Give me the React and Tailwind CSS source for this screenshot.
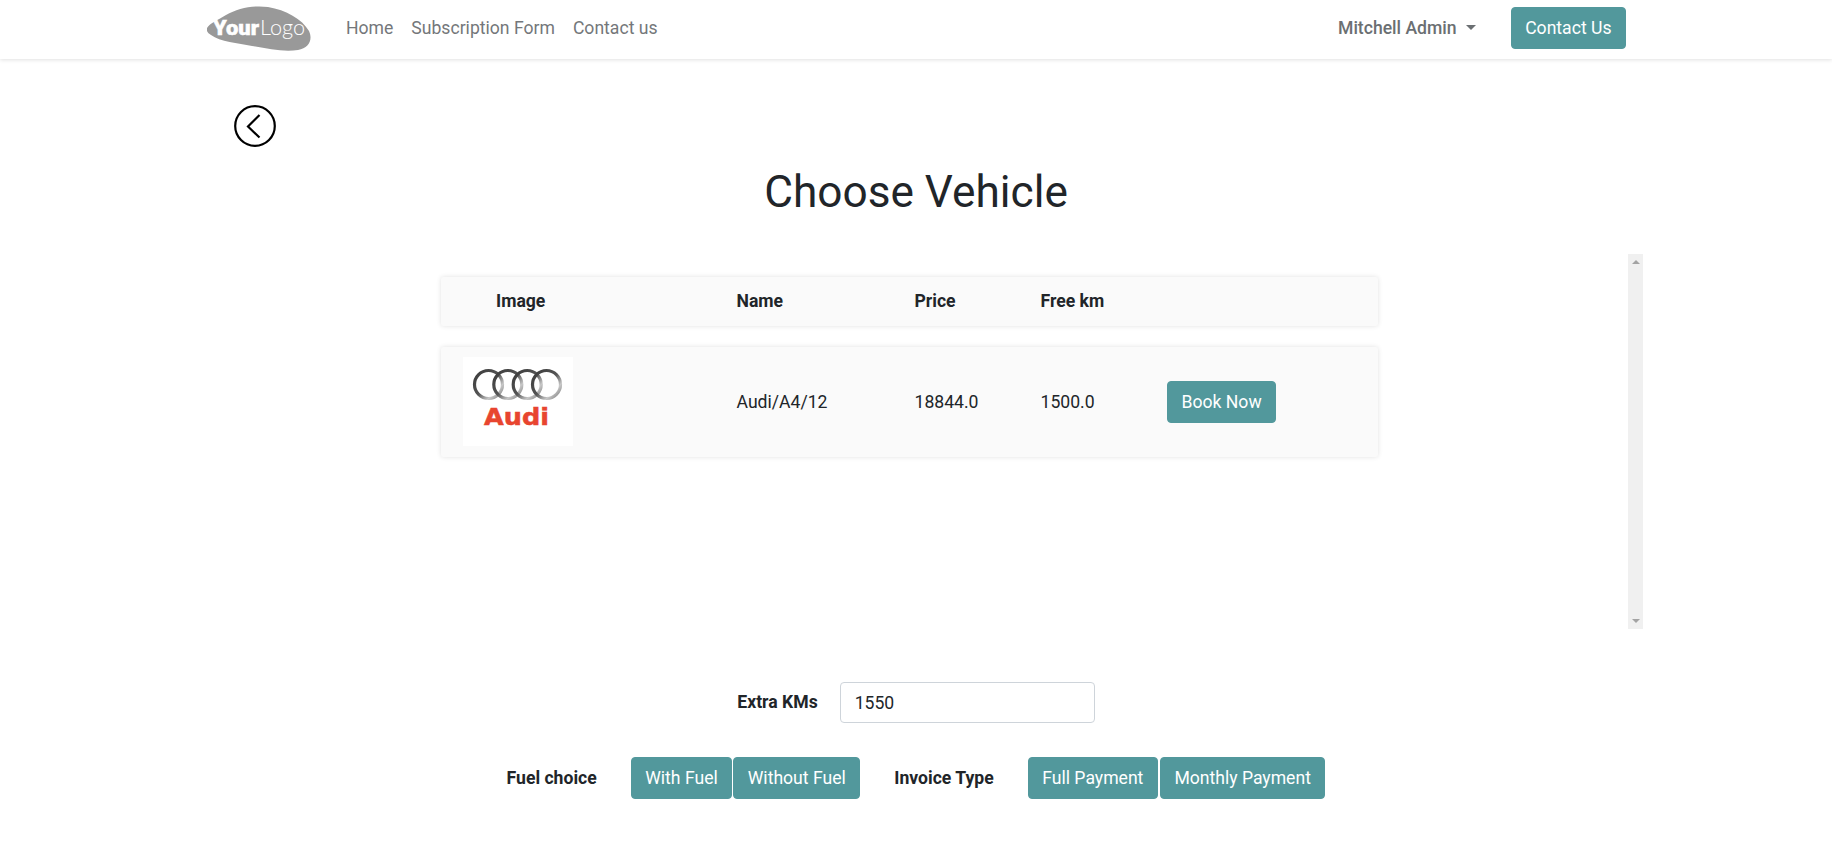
import React from "react";

const btn = "inline-flex items-center justify-center h-[42px] px-[13.5px] rounded-[4px] bg-[#52989c] text-white text-[17.6px] border border-[#52989c]";

function Logo() {
  return (
    <svg width="105" height="45" viewBox="0 0 105 45" className="block">
      <path d="M0 22 C3 17 11 14 19 9 C31 2 47 -1 61 1 C79 4 95 13 102 25 C106 34 102 42 91 44 C77 46 61 43 45 40 C31 37 13 36 4 29 C1 27 -1 25 0 22 Z" fill="#999999" />
      <text x="6" y="29" fontFamily="Roboto, sans-serif" fontSize="21" fontWeight="900" fill="#fff" stroke="#fff" strokeWidth="0.5" textLength="46" lengthAdjust="spacingAndGlyphs">Your</text>
      <text x="53" y="29" fontFamily="Lato, sans-serif" fontSize="22" fontWeight="300" fill="#fff" textLength="45" lengthAdjust="spacingAndGlyphs">Logo</text>
    </svg>
  );
}

function BackIcon() {
  return (
    <svg width="42" height="42" viewBox="0 0 42 42" fill="none" stroke="#000" className="block">
      <circle cx="21" cy="21" r="19.8" strokeWidth="2.2" />
      <path d="M25.5 10 L14 21.5 L25.5 32.5" strokeWidth="2.2" />
    </svg>
  );
}

function AudiLogo() {
  return (
    <div className="w-[110px] h-[89px] bg-white shrink-0">
      <svg width="110" height="89" viewBox="0 0 110 89" className="block">
        <defs>
          <linearGradient id="ring" x1="0" y1="0" x2="1" y2="1">
            <stop offset="0" stopColor="#3a3a3a" />
            <stop offset="0.5" stopColor="#555" />
            <stop offset="0.75" stopColor="#c8c8c8" />
            <stop offset="1" stopColor="#777" />
          </linearGradient>
        </defs>
        {[25.5, 44.8, 64.2, 83.5].map((cx) => (
          <circle key={cx} cx={cx} cy="27.5" r="14" fill="none" stroke="url(#ring)" strokeWidth="3.2" />
        ))}
        <text x="21" y="68" fontFamily="DejaVu Sans, sans-serif" fontSize="23" fontWeight="700" fill="#e8452f" stroke="#e8452f" strokeWidth="0.5" textLength="65" lengthAdjust="spacingAndGlyphs">Audi</text>
      </svg>
    </div>
  );
}

const rowGrid = "grid grid-cols-[295.5px_178px_126px_126.5px_1fr] items-center";
const cardShadow = "bg-[#fafafa] rounded-[2px] shadow-[0_0_5px_rgba(0,0,0,0.12)]";

export default function App() {
  return (
    <div className="h-[852px] overflow-hidden bg-white text-[17.6px] text-[#212529] font-['Roboto',sans-serif]">
      <header className="h-[59px] bg-white shadow-[0_1px_4px_rgba(0,0,0,0.12)] relative">
        <div className="h-full flex items-center pl-[207px] pr-[206px] pb-[3px]">
          <Logo />
          <nav className="flex items-center ml-[34px] gap-[18px] text-[#74777a]">
            <span>Home</span>
            <span>Subscription Form</span>
            <span>Contact us</span>
          </nav>
          <div className="ml-auto flex items-center font-medium text-[#6b6f72]">
            <span>Mitchell Admin</span>
            <span className="ml-[9px] w-0 h-0 border-x-[5px] border-x-transparent border-t-[5px] border-t-[#6b6f72]" />
          </div>
          <button className={btn + " ml-[35px]"}>Contact Us</button>
        </div>
      </header>

      <main>
        <div className="pl-[234px] pt-[46px]">
          <BackIcon />
        </div>
        <h1 className="text-center text-[44.2px] leading-[53px] font-normal text-[#212529] mt-[19px]">Choose Vehicle</h1>

        <div className="mt-[35px] ml-[189px] w-[1454px] h-[375px] flex">
          <div className="flex-1 pt-[23px] pl-[252px] pr-[250px]">
            <div className={rowGrid + " h-[49px] font-bold " + cardShadow}>
              <span className="pl-[55px]">Image</span>
              <span>Name</span>
              <span>Price</span>
              <span>Free km</span>
              <span />
            </div>
            <div className={rowGrid + " h-[110px] mt-[21px] " + cardShadow}>
              <div className="pl-[22px] pb-[2px]"><AudiLogo /></div>
              <span>Audi/A4/12</span>
              <span>18844.0</span>
              <span>1500.0</span>
              <div><button className={btn}>Book Now</button></div>
            </div>
          </div>
          <div className="w-[15px] bg-[#f0f0f0] flex flex-col items-center justify-between py-[6px]">
            <span className="w-0 h-0 border-x-[4px] border-x-transparent border-b-[4px] border-b-[#a3a3a3]" />
            <span className="w-0 h-0 border-x-[4px] border-x-transparent border-t-[4px] border-t-[#a3a3a3]" />
          </div>
        </div>

        <div className="mt-[53px] flex items-center justify-center">
          <label className="font-bold">Extra KMs</label>
          <input readOnly value="1550" className="ml-[22px] w-[255px] h-[41px] px-[14px] rounded-[4px] border border-[#ced4da] text-[#212529] outline-none" />
        </div>

        <div className="mt-[34px] flex items-center justify-center">
          <span className="font-bold">Fuel choice</span>
          <div className="ml-[34px] flex gap-[1px]">
            <button className={btn}>With Fuel</button>
            <button className={btn}>Without Fuel</button>
          </div>
          <span className="font-bold ml-[34px]">Invoice Type</span>
          <div className="ml-[34px] flex gap-[2px]">
            <button className={btn}>Full Payment</button>
            <button className={btn}>Monthly Payment</button>
          </div>
        </div>
      </main>
    </div>
  );
}
